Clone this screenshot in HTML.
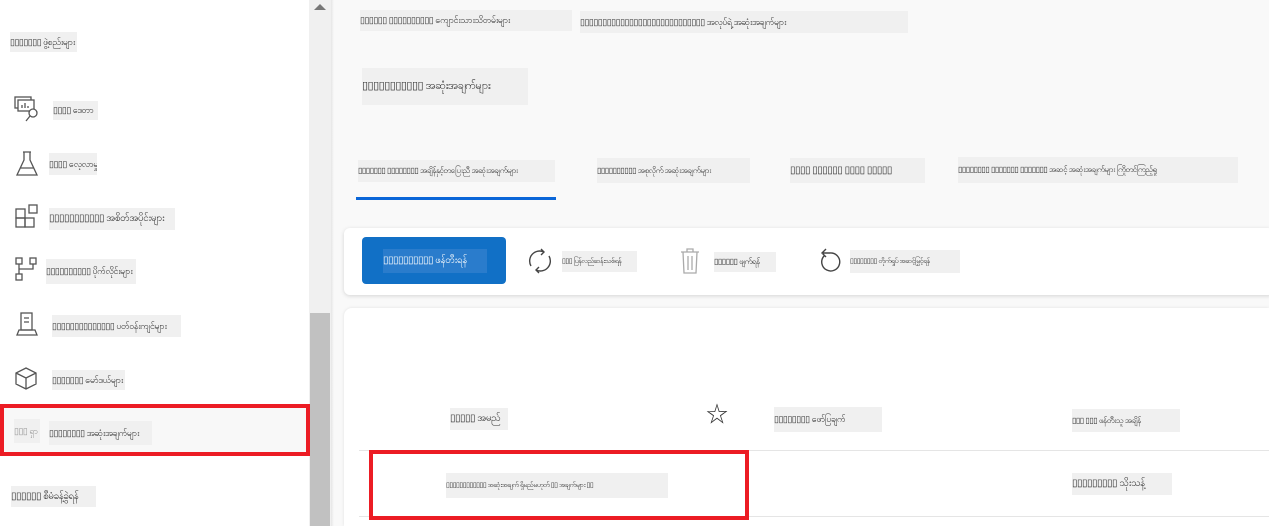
<!DOCTYPE html>
<html style="width:1269px;height:526px;overflow:hidden"><head><meta charset="utf-8">
<style>
*{margin:0;padding:0;box-sizing:border-box}
body{width:1269px;height:526px;overflow:hidden;background:#f9f9f9;font-family:"Liberation Sans","Noto Sans CJK SC",sans-serif;position:relative;color:#222}
.a{position:absolute}
.t{position:absolute;background:#f0f0f0;font-size:9px;line-height:1;display:flex;align-items:center;white-space:nowrap;overflow:hidden;color:#333;letter-spacing:-0.5px}
#side{position:absolute;left:0;top:0;width:310px;height:526px;background:#fff}
svg{position:absolute}
</style></head><body>
<div id="side"></div>
<div class="a" style="left:309px;top:0;width:22px;height:526px;background:#f0f0f0"></div>
<div class="a" style="left:310px;top:313px;width:20px;height:213px;background:#c1c1c1"></div>
<div class="a" style="left:314px;top:4px;width:0;height:0;border-left:6px solid transparent;border-right:6px solid transparent;border-bottom:6px solid #777"></div>
<div class="a" style="left:331px;top:0;width:3px;height:526px;background:linear-gradient(90deg,#e6e6e6,#f9f9f9)"></div>

<div class="t" style="left:10px;top:32px;width:67px;height:20px">▯▯▯▯▯▯▯ ဖွဲ့စည်းများ</div>

<svg style="left:14px;top:96px" width="26" height="26" viewBox="0 0 26 26" fill="none" stroke="#555" stroke-width="1.3"><rect x="1" y="1" width="16" height="11"/><rect x="4" y="4" width="16" height="11" fill="#fff"/><path d="M8 12v-3M11 12v-5M14 12v-2"/><circle cx="19" cy="17" r="4" fill="#fff"/><path d="M16 20l-4 5"/></svg>
<div class="t" style="left:53px;top:101px;width:45px;height:19px">▯▯▯▯ ဒေတာ</div>

<svg style="left:15px;top:151px" width="24" height="26" viewBox="0 0 24 26" fill="none" stroke="#555" stroke-width="1.3"><path d="M8 1h8M9 1v8L2 24h20L15 9V1M5 17h14"/></svg>
<div class="t" style="left:49px;top:153px;width:48px;height:22px">▯▯▯▯ လေ့လာမှုများ</div>

<svg style="left:15px;top:204px" width="26" height="26" viewBox="0 0 26 26" fill="none" stroke="#555" stroke-width="1.3"><rect x="1" y="5" width="9" height="9"/><rect x="1" y="14" width="9" height="9"/><rect x="10" y="14" width="9" height="9"/><rect x="14" y="1" width="8" height="8"/></svg>
<div class="t" style="left:49px;top:208px;width:126px;height:22px;font-size:10px">▯▯▯▯▯▯▯▯▯▯▯ အစိတ်အပိုင်းများ</div>

<svg style="left:15px;top:257px" width="24" height="26" viewBox="0 0 24 26" fill="none" stroke="#555" stroke-width="1.3"><rect x="1" y="1" width="6" height="6"/><rect x="15" y="1" width="6" height="6"/><rect x="1" y="17" width="6" height="6"/><path d="M4 7v10M4 12h14V7"/></svg>
<div class="t" style="left:46px;top:259px;width:90px;height:25px">▯▯▯▯▯▯▯▯▯▯ ပိုက်လိုင်းများ</div>

<svg style="left:16px;top:312px" width="24" height="26" viewBox="0 0 24 26" fill="none" stroke="#555" stroke-width="1.3"><rect x="5" y="1" width="11" height="17"/><path d="M8 6h5M8 10h5M1 23h20l-2-5H3z"/></svg>
<div class="t" style="left:52px;top:315px;width:129px;height:22px">▯▯▯▯▯▯▯▯▯▯▯▯▯▯ ပတ်ဝန်းကျင်များ</div>

<svg style="left:15px;top:367px" width="24" height="24" viewBox="0 0 24 24" fill="none" stroke="#555" stroke-width="1.3"><path d="M11 1l10 5v11l-10 5-10-5V6zM1 6l10 5 10-5M11 11v11"/></svg>
<div class="t" style="left:52px;top:370px;width:73px;height:20px">▯▯▯▯▯▯▯ မော်ဒယ်များ</div>

<div class="a" style="left:0;top:404px;width:310px;height:52px;border:4px solid #ec1c24;background:#f8f8f8"></div>
<div class="t" style="left:14px;top:419px;width:26px;height:24px;color:#999">▯▯▯ ရှာ</div>
<div class="t" style="left:49px;top:421px;width:103px;height:24px">▯▯▯▯▯▯▯▯ အဆုံးအချက်များ</div>

<div class="t" style="left:11px;top:486px;width:85px;height:21px;font-size:10px">▯▯▯▯▯▯ စီမံခန့်ခွဲရန်</div>

<div class="t" style="left:360px;top:10px;width:212px;height:21px">▯▯▯▯▯▯ ▯▯▯▯▯▯▯▯▯▯ ကျောင်းသားသိတမ်းများ</div>
<div class="t" style="left:580px;top:11px;width:328px;height:22px">▯▯▯▯▯▯▯▯▯▯▯▯▯▯▯▯▯▯▯▯▯▯▯▯▯▯▯▯ အလုပ်ရဲ့ အဆုံးအချက်များ</div>
<div class="t" style="left:362px;top:68px;width:166px;height:37px;font-size:11px">▯▯▯▯▯▯▯▯▯▯▯ အဆုံးအချက်များ</div>

<div class="t" style="left:358px;top:160px;width:197px;height:22px;font-size:8px">▯▯▯▯▯▯▯ ▯▯▯▯▯▯▯▯ အချိန်နှင့်တပြေးညီ အဆုံးအချက်များ</div>
<div class="a" style="left:356px;top:197px;width:200px;height:3px;background:#0a66d8"></div>
<div class="t" style="left:597px;top:158px;width:153px;height:25px;font-size:8px">▯▯▯▯▯▯▯▯▯▯ အစုလိုက် အဆုံးအချက်များ</div>
<div class="t" style="left:790px;top:158px;width:135px;height:25px;font-size:10px">▯▯▯▯ ▯▯▯▯▯▯ ▯▯▯▯ ▯▯▯▯▯</div>
<div class="t" style="left:958px;top:157px;width:280px;height:26px;font-size:8px">▯▯▯▯▯▯▯▯ ▯▯▯▯▯▯▯ ▯▯▯▯▯▯▯ အဆင့် အဆုံးအချက်များ ကြိုတင်ကြည့်ရှု</div>

<div class="a" style="left:344px;top:228px;width:930px;height:67px;background:#fff;border-radius:6px;box-shadow:0 1px 4px rgba(0,0,0,0.15)"></div>
<div class="a" style="left:362px;top:237px;width:144px;height:47px;background:#1170c6;border-radius:4px"></div>
<div class="t" style="left:383px;top:249px;width:104px;height:24px;background:#2a7ccc;color:#fff;font-size:10px">▯▯▯▯▯▯▯▯▯▯ ဖန်တီးရန်</div>
<svg style="left:527px;top:247px" width="26" height="28" viewBox="0 0 26 28" fill="none" stroke="#444" stroke-width="1.4"><path d="M17 5A10 10 0 0 0 4 19M9 23A10 10 0 0 0 22 9M14 2l3 3-3 3M12 26l-3-3 3-3"/></svg>
<div class="t" style="left:562px;top:251px;width:75px;height:21px;font-size:7px">▯▯▯ ပြန်လည်ဆန်းသစ်ရန်</div>
<svg style="left:680px;top:248px" width="20" height="26" viewBox="0 0 20 26" fill="none" stroke="#aaa" stroke-width="1.3"><path d="M1 4h18M7 4V1h6v3M3 4l1 21h12l1-21M8 8v14M12 8v14"/></svg>
<div class="t" style="left:714px;top:252px;width:62px;height:20px;font-size:8px">▯▯▯▯▯▯ ဖျက်ရန်</div>
<svg style="left:818px;top:248px" width="26" height="28" viewBox="0 0 26 28" fill="none" stroke="#444" stroke-width="1.4"><path d="M6 8A9 9 0 1 0 12 5H5M8 1L4 5l4 4"/></svg>
<div class="t" style="left:850px;top:250px;width:110px;height:23px;font-size:7px">▯▯▯▯▯▯▯▯ တိုက်ရှုပ် အဆင့်မြှင့်ရန်</div>

<div class="a" style="left:344px;top:308px;width:925px;height:218px;background:#fff;border-radius:8px 0 0 0;box-shadow:0 0 3px rgba(0,0,0,0.1)"></div>
<div class="t" style="left:450px;top:408px;width:58px;height:22px;font-size:10px">▯▯▯▯▯ အမည်</div>
<div class="a" style="left:706px;top:404px;font-size:22px;color:#333;line-height:1">☆</div>
<div class="t" style="left:774px;top:407px;width:108px;height:25px;font-size:9px">▯▯▯▯▯▯▯▯ ဖော်ပြချက်</div>
<div class="t" style="left:1072px;top:409px;width:108px;height:23px;font-size:8px">▯▯▯ ▯▯▯ ဖန်တီးသူ အချိန်</div>
<div class="a" style="left:359px;top:450px;width:910px;height:1px;background:#e5e5e5"></div>
<div class="a" style="left:359px;top:516px;width:910px;height:1px;background:#e5e5e5"></div>
<div class="a" style="left:369px;top:450px;width:380px;height:70px;border:4px solid #ec1c24"></div>
<div class="t" style="left:446px;top:473px;width:222px;height:25px;font-size:7px">▯▯▯▯▯▯▯▯▯▯▯▯ အဆုံးအချက် ရှိမည်မဟုတ် ▯▯ အချက်များ ▯▯</div>
<div class="t" style="left:1072px;top:473px;width:100px;height:22px;font-size:10px">▯▯▯▯▯▯▯▯▯ သိုးသန့်</div>
</body></html>
